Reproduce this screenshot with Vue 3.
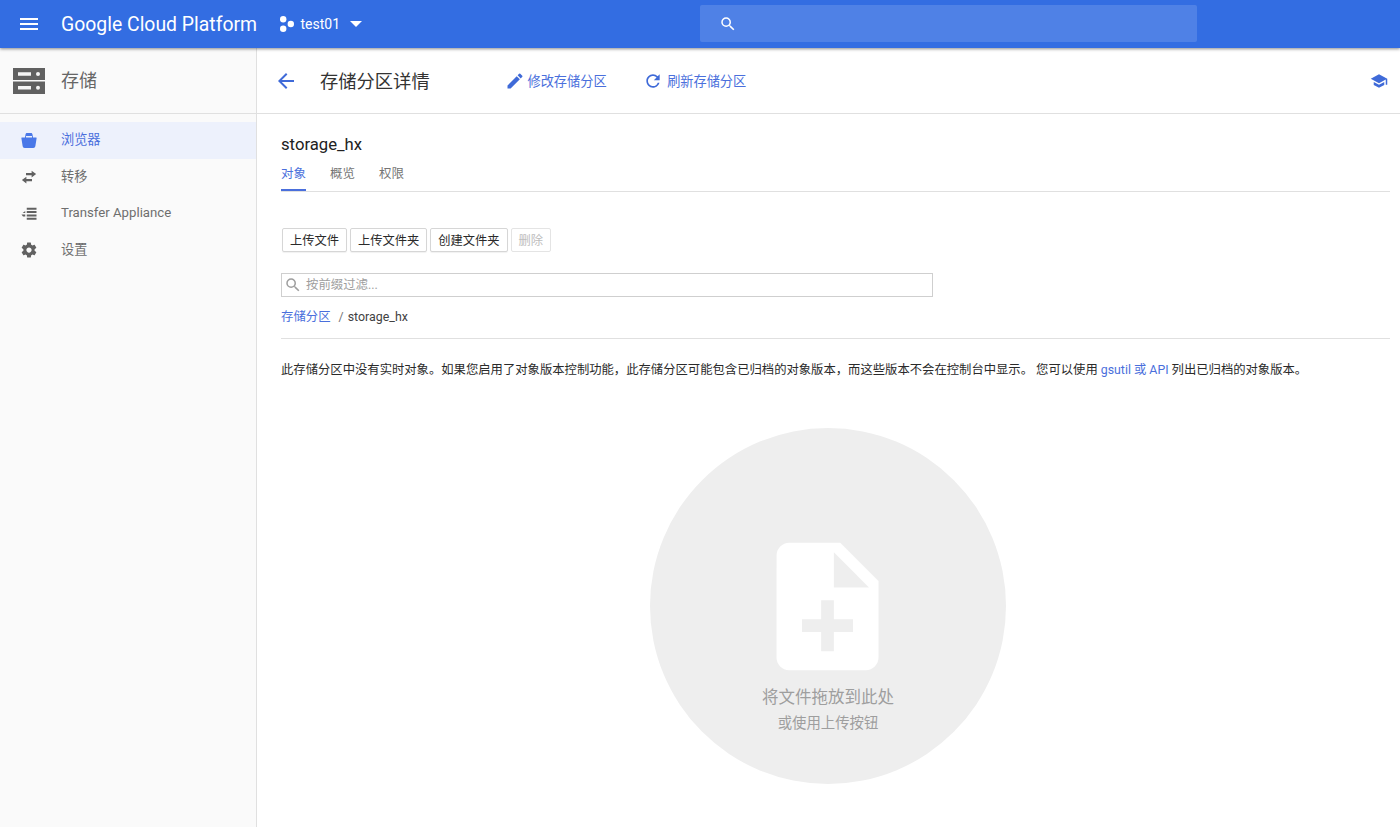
<script setup>
const navItems = [
  { label: '浏览器', icon: 'basket', active: true },
  { label: '转移', icon: 'swap' },
  { label: 'Transfer Appliance', icon: 'appliance' },
  { label: '设置', icon: 'gear' },
]
const tabs = ['对象', '概览', '权限']
const buttons = [
  { label: '上传文件' },
  { label: '上传文件夹' },
  { label: '创建文件夹' },
  { label: '删除', disabled: true },
]
</script>

<template>
  <div class="page">
    <header class="topbar">
      <svg class="menu" viewBox="0 0 24 24" width="24" height="24"><path d="M3 18h18v-2H3v2zm0-5h18v-2H3v2zm0-7v2h18V6H3z" /></svg>
      <span class="brand">Google Cloud Platform</span>
      <div class="project">
        <svg viewBox="0 0 14 16" width="14" height="16"><circle cx="3.2" cy="3.200" r="3.200" /><circle cx="3.2" cy="12.800" r="3.200" /><circle cx="10.800" cy="8" r="3.200" /></svg>
        <span class="project-name">test01</span>
        <svg viewBox="0 0 12 6" width="12" height="6"><path d="M0 0h12L6 6z" /></svg>
      </div>
      <div class="search">
        <svg viewBox="0 0 24 24" width="18" height="18"><path d="M15.5 14h-.79l-.28-.27A6.47 6.47 0 0 0 16 9.5 6.5 6.5 0 1 0 9.5 16c1.61 0 3.09-.59 4.23-1.57l.27.28v.79l5 4.99L20.49 19l-4.99-5zm-6 0C7.01 14 5 11.99 5 9.5S7.01 5 9.5 5 14 7.01 14 9.5 11.99 14 9.5 14z" /></svg>
      </div>
    </header>

    <div class="body">
      <aside class="sidebar">
        <div class="product">
          <svg viewBox="0 0 32 26" width="32" height="26">
            <path fill="#616161" d="M0 0h32v12H0zM0 13.500h32V26H0z" />
            <path fill="#f5f5f5" d="M5 4.300h13v3.400H5zM5 18h13v3.400H5z" />
            <circle cx="25" cy="6" r="2" fill="#f5f5f5" /><circle cx="25" cy="19.700" r="2" fill="#f5f5f5" />
          </svg>
          <span>存储</span>
        </div>
        <nav class="nav">
          <a v-for="item in navItems" :key="item.label" class="nav-item" :class="{ active: item.active }">
            <svg viewBox="0 0 24 24" width="18" height="18">
              <path v-if="item.icon === 'basket'" fill-rule="evenodd" d="M9.300 2.500h5.400c.9 0 1.600.6 1.800 1.500l.9 4.500h4.100c.5 0 .8.400.7.900l-1.700 10.500c-.2 1.500-1.300 2.600-2.800 2.600H6.300c-1.500 0-2.600-1.100-2.800-2.600L1.800 9.400c-.1-.5.2-.9.7-.9h4.100L7.500 4c.2-.9.900-1.500 1.800-1.500zM8 6.800v1.700h8V6.800z" />
              <path v-else-if="item.icon === 'swap'" d="M8 6.500h7.500V3.500L21.500 8l-6 4.500v-3H8zM16 14.500H8.500v-3l-6 4.500 6 4.500v-3H16z" />
              <path v-else-if="item.icon === 'appliance'" d="M9 3.500h13v2.700H9zM9 8h13v2.700H9zM9 12.500h13v2.700H9zM9 17h13v2.700H9zM7 8v2.700H3.500zM2 12.500h5v2.700H4z" />
              <path v-else d="M19.430 12.980c.04-.32.07-.64.07-.98s-.03-.66-.07-.98l2.110-1.650c.19-.15.24-.42.12-.64l-2-3.460c-.12-.22-.39-.3-.61-.22l-2.490 1c-.52-.4-1.080-.73-1.690-.98l-.38-2.650A.488.488 0 0 0 14 2h-4c-.25 0-.46.18-.49.42l-.38 2.650c-.61.25-1.170.59-1.690.98l-2.490-1c-.23-.09-.49 0-.61.22l-2 3.460c-.13.22-.07.49.12.64l2.110 1.650c-.04.32-.07.65-.07.98s.03.66.07.98l-2.110 1.650c-.19.15-.24.42-.12.64l2 3.460c.12.22.39.3.61.22l2.490-1c.52.4 1.080.73 1.690.98l.38 2.650c.03.24.24.42.49.42h4c.25 0 .46-.18.49-.42l.38-2.650c.61-.25 1.170-.59 1.690-.98l2.490 1c.23.09.49 0 .61-.22l2-3.460c.12-.22.07-.49-.12-.64l-2.110-1.650zM12 15.500c-1.930 0-3.500-1.570-3.500-3.500s1.570-3.500 3.500-3.500 3.500 1.570 3.500 3.500-1.570 3.500-3.500 3.500z" />
            </svg>
            <span>{{ item.label }}</span>
          </a>
        </nav>
      </aside>

      <main class="main">
        <div class="toolbar">
          <svg class="back" viewBox="0 0 24 24" width="24" height="24"><path d="M20 11H7.830l5.590-5.590L12 4l-8 8 8 8 1.410-1.410L7.830 13H20v-2z" /></svg>
          <h1>存储分区详情</h1>
          <a class="action first">
            <svg viewBox="0 0 24 24" width="20" height="20"><path d="M3 17.250V21h3.750L17.810 9.940l-3.750-3.750L3 17.250zM20.710 7.040a.996.996 0 0 0 0-1.410l-2.340-2.340a.996.996 0 0 0-1.410 0l-1.830 1.830 3.750 3.750 1.830-1.830z" /></svg>
            <span>修改存储分区</span>
          </a>
          <a class="action second">
            <svg viewBox="0 0 24 24" width="20" height="20"><path d="M17.650 6.350A7.958 7.958 0 0 0 12 4c-4.420 0-7.990 3.580-7.990 8s3.570 8 7.990 8c3.730 0 6.840-2.550 7.730-6h-2.080A5.990 5.990 0 0 1 12 18c-3.310 0-6-2.690-6-6s2.690-6 6-6c1.660 0 3.140.69 4.220 1.780L13 11h7V4l-2.350 2.350z" /></svg>
            <span>刷新存储分区</span>
          </a>
          <svg class="school" viewBox="0 0 24 24" width="18" height="18"><path d="M5 13.180v4L12 21l7-3.820v-4L12 17l-7-3.820zM12 3L1 9l11 6 9-4.910V17h2V9L12 3z" /></svg>
        </div>

        <section class="content">
          <h2>storage_hx</h2>
          <div class="tabs">
            <a v-for="(tab, i) in tabs" :key="tab" class="tab" :class="{ active: i === 0 }">{{ tab }}</a>
          </div>
          <div class="buttons">
            <button v-for="b in buttons" :key="b.label" class="btn" :disabled="b.disabled">{{ b.label }}</button>
          </div>
          <div class="filter">
            <svg viewBox="0 0 24 24" width="18" height="18"><path d="M15.500 14h-.79l-.28-.27A6.470 6.470 0 0 0 16 9.500 6.500 6.500 0 1 0 9.500 16c1.610 0 3.090-.59 4.230-1.570l.27.28v.79l5 4.990L20.490 19l-4.990-5zm-6 0C7.010 14 5 11.990 5 9.500S7.010 5 9.500 5 14 7.010 14 9.500 11.990 14 9.500 14z" /></svg>
            <span>按前缀过滤...</span>
          </div>
          <div class="crumbs"><a>存储分区</a><span class="sep">/</span><span>storage_hx</span></div>
          <p class="notice">此存储分区中没有实时对象。如果您启用了对象版本控制功能，此存储分区可能包含已归档的对象版本，而这些版本不会在控制台中显示。 您可以使用 <a>gsutil 或 API</a> 列出已归档的对象版本。</p>
          <div class="drop">
            <svg viewBox="0 0 24 24" width="153" height="153"><path d="M14 2H6c-1.100 0-1.990.9-1.990 2L4 20c0 1.100.89 2 1.990 2H18c1.100 0 2-.9 2-2V8l-6-6zm2 14h-3v3h-2v-3H8v-2h3v-3h2v3h3v2zm-3-7V3.500L18.500 9H13z" /></svg>
            <div class="drop-title">将文件拖放到此处</div>
            <div class="drop-sub">或使用上传按钮</div>
          </div>
        </section>
      </main>
    </div>
  </div>
</template>

<style>
html, body { margin: 0; height: 100%; overflow: hidden; background: #fff; }
</style>

<style scoped>
.page { height: 827px; display: flex; flex-direction: column; font-family: Roboto, "Noto Sans CJK SC", sans-serif; color: #212121; overflow: hidden; }
.topbar { position: relative; z-index: 2; height: 48px; flex: none; display: flex; align-items: center; background: #336de2; box-shadow: 0 1px 3px rgba(0,0,0,.45); color: #fff; }
.topbar svg { fill: #fff; flex: none; }
.menu { margin-left: 17px; }
.brand { margin-left: 20px; width: 219px; font-size: 19.4px; white-space: nowrap; }
.project { display: flex; align-items: center; width: 420px; font-size: 14px; }
.project-name { margin: 0 10px 0 6.5px; }
.search { width: 497px; height: 37px; margin-top: -1px; display: flex; align-items: center; padding-left: 19px; box-sizing: border-box; background: rgba(255,255,255,.14); border-radius: 2px; }
.body { flex: 1; display: flex; min-height: 0; }
.sidebar { width: 256px; flex: none; background: #fafafa; border-right: 1px solid #e0e0e0; }
.product { height: 66px; display: flex; align-items: center; border-bottom: 1px solid #e0e0e0; box-sizing: border-box; font-size: 18px; color: #666; }
.product svg { margin-left: 13px; margin-right: 16px; }
.product span { margin-bottom: 4px; }
.nav { padding-top: 8px; }
.nav-item { height: 36.7px; box-sizing: border-box; display: flex; align-items: center; font-size: 13.2px; color: #6e6e6e; }
.nav-item span { margin-bottom: 3px; }
.nav-item svg { margin: 0 23.5px 0 19.5px; fill: #616161; flex: none; }
.nav-item.active { background: #edf1fc; color: #4a6fdc; }
.nav-item.active svg { fill: #4a78e8; }
.main { flex: 1; min-width: 0; background: #fff; }
.toolbar { height: 66px; display: flex; align-items: center; box-sizing: border-box; border-bottom: 1px solid #e0e0e0; padding: 0 12px 0 17px; }
.toolbar svg { fill: #3f6ad8; flex: none; }
.toolbar h1 { margin: 0 0 2px 22px; width: 110px; font-size: 18.3px; font-weight: 400; color: #333; white-space: nowrap; }
.action { display: flex; align-items: center; gap: 3px; font-size: 13.2px; color: #4a6fdc; }
.action.first { margin-left: 74.5px; }
.action.second { margin-left: 36.5px; gap: 4px; }
.school { margin-left: auto; }
.content { padding: 0 10px 0 24px; }
h2 { margin: 0; padding-top: 21px; font-size: 16.7px; font-weight: 400; line-height: 20px; color: #212121; }
.tabs { display: flex; gap: 24px; height: 37px; border-bottom: 1px solid #e0e0e0; box-sizing: border-box; }
.tab { height: 36px; line-height: 17px; padding-top: 10px; box-sizing: border-box; font-size: 12.5px; color: #757575; }
.tab.active { color: #4a6fdc; border-bottom: 2px solid #4a6fdc; }
.buttons { display: flex; gap: 3px; margin-top: 36px; margin-left: 1px; }
.btn { height: 24px; padding: 0 7px; box-sizing: border-box; border: 1px solid #d6d6d6; border-radius: 2px; background: #fff; font: 12.25px Roboto, "Noto Sans CJK SC", sans-serif; color: #2a2a2a; box-shadow: 0 1px 1px rgba(0,0,0,.06); }
.btn:disabled { color: #bdbdbd; border-color: #e4e4e4; box-shadow: none; }
.filter { width: 652px; height: 24px; margin-top: 21px; display: flex; align-items: center; box-sizing: border-box; border: 1px solid #cfcfcf; font-size: 12.4px; color: #9e9e9e; }
.filter svg { fill: #9e9e9e; margin: 0 4px 0 2px; }
.filter span { margin-bottom: 2px; }
.crumbs { height: 42px; padding-top: 12px; box-sizing: border-box; border-bottom: 1px solid #e0e0e0; font-size: 12.4px; line-height: 16px; color: #424242; }
.crumbs a, .notice a { color: #4a6fdc; }
.sep { margin: 0 4px 0 8px; color: #757575; }
.notice { margin: 23px 0 0; font-size: 12.33px; line-height: 17px; color: #2a2a2a; white-space: nowrap; }
.drop { width: 356px; height: 356px; margin: 49px 0 0 369px; border-radius: 50%; background: #eeeeee; display: flex; flex-direction: column; align-items: center; color: #9e9e9e; }
.drop svg { fill: #fff; margin: 102px 2px 0 0; }
.drop-title { margin-top: 3px; font-size: 16.5px; line-height: 24px; }
.drop-sub { margin-top: 4px; font-size: 14.4px; line-height: 20px; }
</style>
